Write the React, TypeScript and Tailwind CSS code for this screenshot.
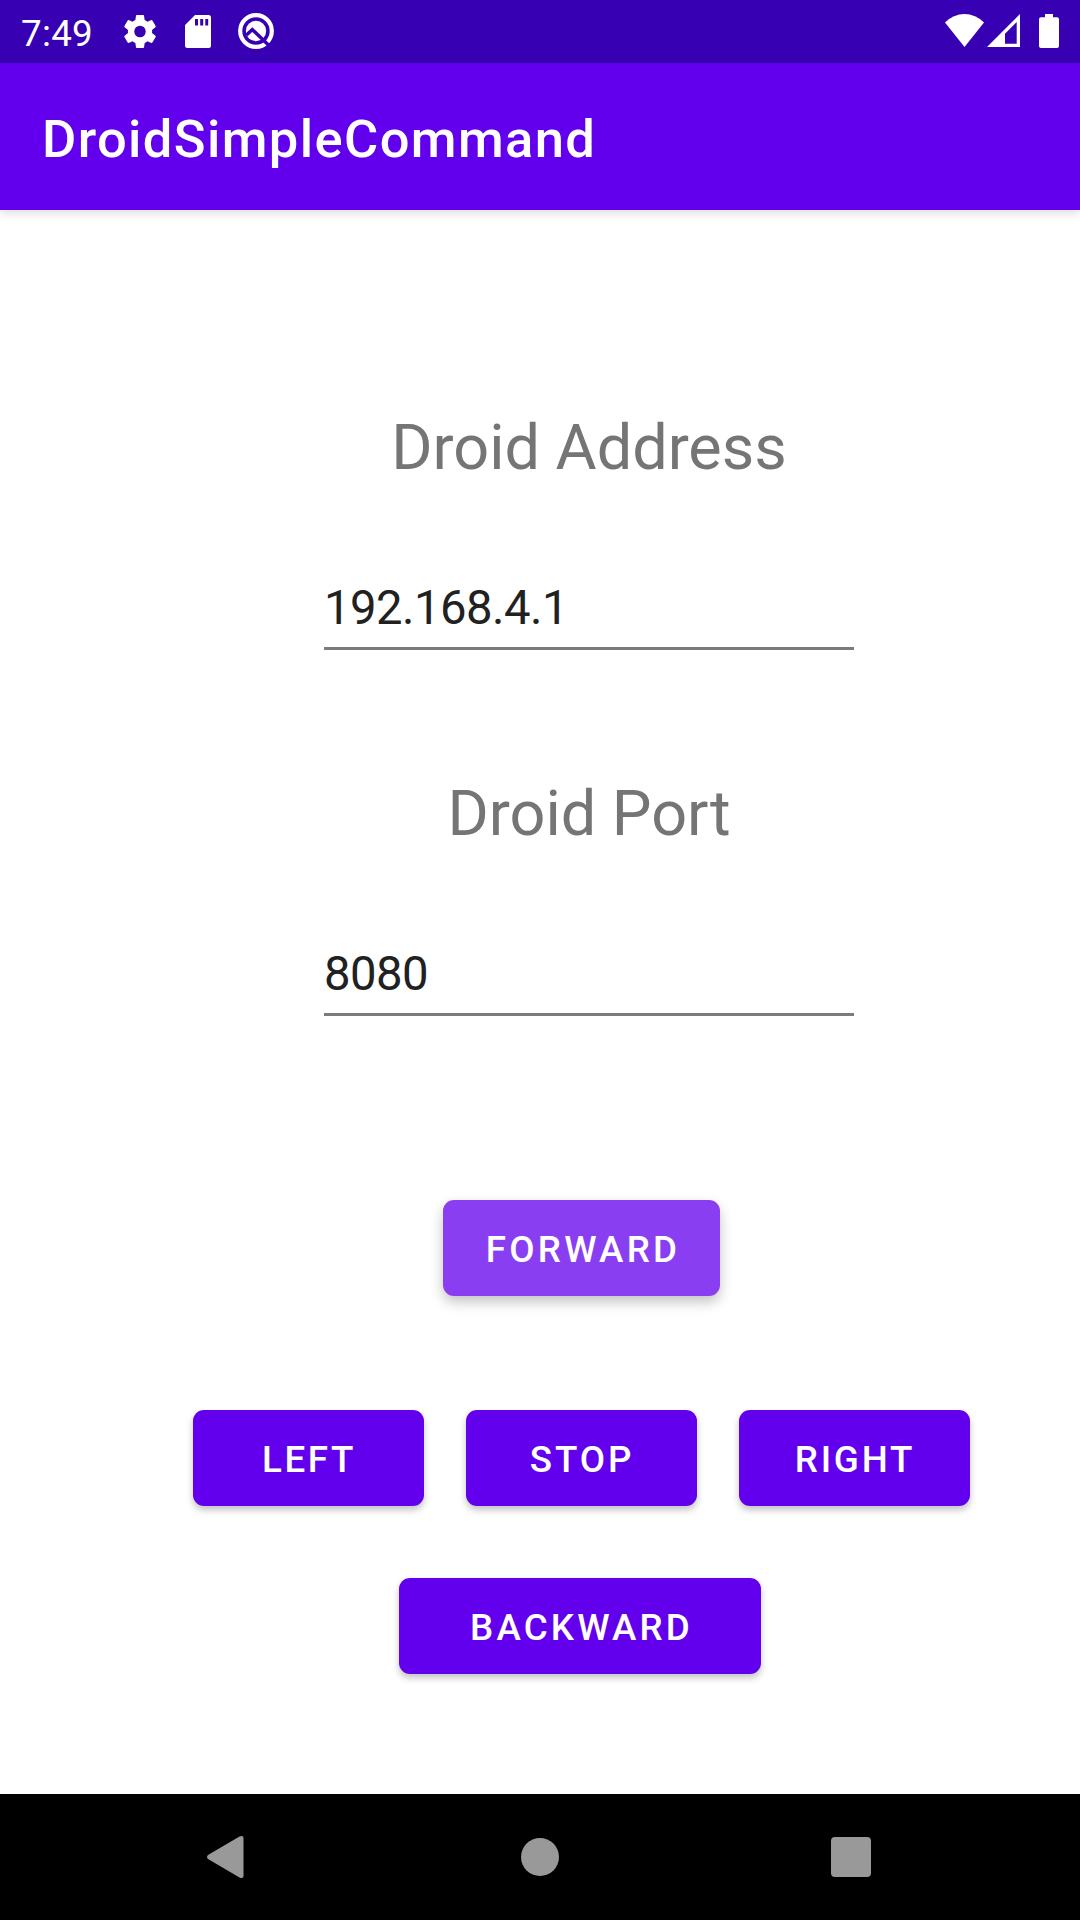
import React from "react";

function StatusBar() {
  return (
    <header className="flex h-[63px] items-start justify-between bg-[#3700b3] pl-[21px] pr-[21px] text-white">
      <div className="flex items-start">
        <span className="mt-[12px] w-[103px] text-[36.75px] leading-[43px] tracking-[0.3px]">7:49</span>
        <svg className="mt-[15px] h-[33px] w-[32px]" viewBox="2.5 2.4 19 19.2" preserveAspectRatio="none" fill="currentColor">
          <path d="M19.14 12.94c.04-.3.06-.61.06-.94s-.02-.64-.07-.94l2.03-1.58a.49.49 0 0 0 .12-.61l-1.92-3.32a.49.49 0 0 0-.59-.22l-2.39.96a7 7 0 0 0-1.62-.94l-.36-2.54A.48.48 0 0 0 13.92 2.4h-3.84a.47.47 0 0 0-.47.41l-.36 2.54a7.3 7.3 0 0 0-1.62.94l-2.39-.96a.47.47 0 0 0-.59.22L2.74 8.87a.47.47 0 0 0 .12.61l2.03 1.58a6 6 0 0 0 0 1.88l-2.03 1.58a.49.49 0 0 0-.12.61l1.92 3.32c.12.22.37.29.59.22l2.39-.96c.5.38 1.03.7 1.62.94l.36 2.54c.05.24.24.41.48.41h3.84c.24 0 .44-.17.47-.41l.36-2.54a7 7 0 0 0 1.62-.94l2.39.96c.22.08.47 0 .59-.22l1.92-3.32a.47.47 0 0 0-.12-.61zM12 15.4a3.4 3.4 0 1 1 0-6.8 3.4 3.4 0 0 1 0 6.8z" />
        </svg>
        <svg className="ml-[29px] mt-[15px] h-[33px] w-[26px]" viewBox="0 0 26 33" fill="currentColor">
          <path fillRule="evenodd" d="M10 0H23.5Q26 0 26 2.5V30.5Q26 33 23.5 33H2.5Q0 33 0 30.5V10zM10 4V10.5H13V4zM15.2 4V10.5H18.2V4zM20.3 4V10.5H23.200V4z" />
        </svg>
        <svg className="ml-[27px] mt-[13px] h-[36px] w-[36px]" viewBox="0 0 36 36" fill="none">
          <circle cx="18" cy="18" r="15.8" stroke="white" strokeWidth="4.2" />
          <circle cx="18" cy="18" r="10.2" fill="white" />
          <path d="M8.5 22L14.3 16.5L31.5 33" stroke="#3700b3" strokeWidth="3.4" />
        </svg>
      </div>
      <div className="flex">
        <svg className="mt-[14px] h-[33px] w-[39px]" viewBox="0 0 39 33" fill="currentColor">
          <path d="M0 8.5Q8.5 0 19.5 0T39 8.5L19.5 33z" />
        </svg>
        <svg className="ml-[3px] mt-[14px] h-[33px] w-[33px]" viewBox="0 0 33 33" fill="currentColor">
          <path fillRule="evenodd" d="M33 0V33H0zM29.7 8L18 19.7V29.7H29.7z" />
        </svg>
        <svg className="ml-[19px] mt-[14px] h-[34px] w-[20px]" viewBox="0 0 20 34" fill="currentColor">
          <path d="M6 0H14V3.3H18Q20 3.3 20 5.3V32Q20 34 18 34H2Q0 34 0 32V5.3Q0 3.3 2 3.3H6z" />
        </svg>
      </div>
    </header>
  );
}

function Field({ label, value }: { label: string; value: string }) {
  return (
    <div className="flex h-[366px] w-[530px] flex-col">
      <label className="text-center text-[63px] leading-[74px] tracking-[-0.03px] text-[#757575]">{label}</label>
      <div className="mt-[75px] flex h-[90px] w-full items-center border-b-[3px] border-[#7b7b7b] pt-[9px] text-[47.25px] leading-[56px] tracking-[-0.53px] text-[#212121]">
        {value}
      </div>
    </div>
  );
}

function CommandButton({ label, className }: { label: string; className: string }) {
  return (
    <button className={`flex h-24 items-center justify-center rounded-[11px] pt-[2px] text-[36.75px] font-medium leading-[43px] text-white ${className}`}>
      {label}
    </button>
  );
}

const raised = "bg-[#6200ee] shadow-[0_4px_7px_rgba(0,0,0,0.24)]";

export default function App() {
  return (
    <div className="flex h-[1920px] w-[1080px] flex-col overflow-hidden bg-white font-['Roboto',sans-serif]">
      <StatusBar />
      <div className="z-10 flex h-[147px] items-center bg-[#6200ee] pl-[42px] pt-[4px] shadow-[0_3px_9px_rgba(0,0,0,0.14)]">
        <h1 className="text-[52.5px] font-medium leading-[62px] tracking-[1.38px] text-white">DroidSimpleCommand</h1>
      </div>
      <main className="flex flex-1 flex-col bg-white">
        <section className="ml-[324px] mt-[201px] flex flex-col">
          <Field label="Droid Address" value="192.168.4.1" />
          <Field label="Droid Port" value="8080" />
        </section>
        <section className="flex flex-col pt-[57px]">
          <CommandButton label="FORWARD" className="ml-[443px] w-[277px] bg-[#8a3ef2] pl-[3px] tracking-[3.25px] shadow-[0_6px_13px_rgba(0,0,0,0.24)]" />
          <div className="ml-[193px] mt-[114px] flex gap-[42px]">
            <CommandButton label="LEFT" className={`w-[231px] pl-px tracking-[2.6px] ${raised}`} />
            <CommandButton label="STOP" className={`w-[231px] pl-px tracking-[2.9px] ${raised}`} />
            <CommandButton label="RIGHT" className={`w-[231px] pl-px tracking-[2.8px] ${raised}`} />
          </div>
          <CommandButton label="BACKWARD" className={`ml-[399px] mt-[72px] w-[362px] pl-[3px] tracking-[3.15px] ${raised}`} />
        </section>
      </main>
      <nav className="flex h-[126px] items-center bg-black pl-[206px] text-[#999999]">
        <svg className="h-[42px] w-[38px]" viewBox="0 0 38 42" fill="currentColor">
          <path d="M33.5.5Q37.5-1 37.5 2V40Q37.5 43 33.5 41.5L2 23Q0 21 2 19z" />
        </svg>
        <div className="ml-[277px] size-[38px] rounded-full bg-[#999999]" />
        <div className="ml-[272px] size-10 rounded-[4px] bg-[#999999]" />
      </nav>
    </div>
  );
}
